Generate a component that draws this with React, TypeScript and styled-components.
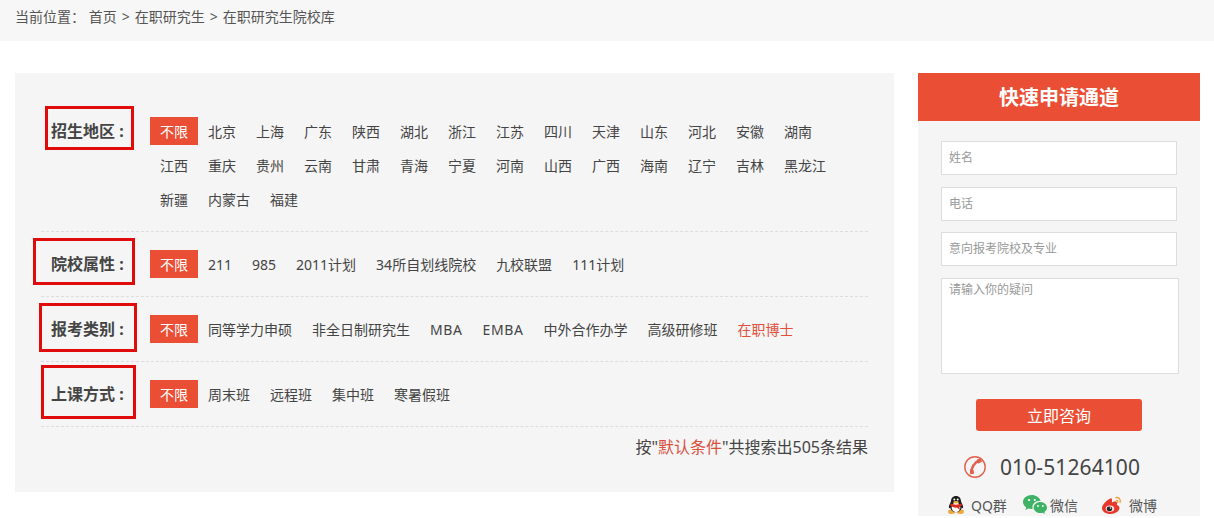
import React from 'react';
import styled, { createGlobalStyle } from 'styled-components';

const accent = '#ea4f35';

const GlobalStyle = createGlobalStyle`
    html, body {
        margin: 0;
        padding: 0;
        background: #fff;
        overflow: hidden;
    }
    body {
        font-family: "Noto Sans", "Noto Sans CJK SC", sans-serif;
        font-size: 14px;
        color: #444;
    }
    * {
        box-sizing: border-box;
    }
`;

const Crumbs = styled.div`
    display: flex;
    height: 41px;
    padding-left: 15px;
    line-height: 34px;
    background: #f7f7f7;
    color: #555;
    white-space: pre;
`;

const CrumbSep = styled.span`
    width: 18px;
    text-align: center;
`;

const Main = styled.div`
    display: flex;
    align-items: flex-start;
    padding: 32px 14px 0 15px;
    gap: 24px;
`;

const Panel = styled.div`
    position: relative;
    width: 879px;
    height: 419px;
    padding: 26px 26px 0;
    background: #f5f5f5;
`;

const Row = styled.div`
    display: flex;
    align-items: flex-start;
    padding: 15px 0;
    border-bottom: 1px dashed #ddd;
`;

const Label = styled.div`
    width: 109px;
    flex: none;
    padding-left: 10px;
    font-size: 16px;
    font-weight: 700;
    line-height: 34px;
    color: #444;
`;

const Tags = styled.div`
    display: flex;
    flex-wrap: wrap;
    flex: 1;
`;

const Tag = styled.a<{ $active?: boolean; $hot?: boolean; $latin?: boolean }>`
    height: 28px;
    margin: 3px 0;
    padding: 0 10px;
    line-height: 30px;
    font-size: 14px;
    white-space: nowrap;
    letter-spacing: ${p => (p.$latin ? '0.6px' : '0')};
    color: ${p => (p.$active ? '#fff' : p.$hot ? '#e2503c' : '#444')};
    background: ${p => (p.$active ? accent : 'transparent')};
`;

const Summary = styled.div`
    margin-top: 8px;
    font-size: 16px;
    line-height: 24px;
    text-align: right;
    color: #444;

    em {
        font-style: normal;
        color: #d9503f;
    }
`;

// the hand-drawn highlights on top of the filter labels
const Marker = styled.div<{ $x: number; $y: number; $w: number; $h: number }>`
    position: absolute;
    left: ${p => p.$x}px;
    top: ${p => p.$y}px;
    width: ${p => p.$w}px;
    height: ${p => p.$h}px;
    border: 3px solid #e00c0c;
    pointer-events: none;
`;

const Side = styled.div`
    width: 282px;
    flex: none;
    background: #f5f5f5;
`;

const SideTitle = styled.div`
    height: 48px;
    line-height: 50px;
    text-align: center;
    font-size: 20px;
    font-weight: 700;
    color: #fff;
    background: ${accent};
`;

const Form = styled.form`
    display: flex;
    flex-direction: column;
    align-items: flex-start;
    padding: 20px 0 0 23px;
`;

const Field = styled.input`
    width: 236px;
    height: 34px;
    margin-bottom: 12px;
    padding: 0 7px 2px;
    border: 1px solid #ddd;
    background: #fff;
    font: 12px "Noto Sans", "Noto Sans CJK SC", sans-serif;
    outline: none;

    &:nth-child(2) {
        margin-bottom: 11px;
    }
    &::placeholder {
        color: #999;
        opacity: 1;
    }
`;

const Question = styled.textarea`
    display: block;
    width: 238px;
    height: 96px;
    padding: 2px 7px;
    border: 1px solid #ddd;
    background: #fff;
    font: 12px/17px "Noto Sans", "Noto Sans CJK SC", sans-serif;
    outline: none;
    resize: none;

    &::placeholder {
        color: #999;
        opacity: 1;
    }
`;

const Submit = styled.button`
    display: block;
    width: 166px;
    height: 32px;
    margin: 25px 0 0 58px;
    padding: 0;
    border: 0;
    border-radius: 3px;
    background: ${accent};
    color: #fff;
    font: 16px "Noto Sans", "Noto Sans CJK SC", sans-serif;
`;

const Phone = styled.div`
    display: flex;
    align-items: center;
    gap: 14px;
    height: 24px;
    margin: 24px 0 0 46px;
    font-size: 21px;
    letter-spacing: 0.1px;
    color: #444;
`;

const Social = styled.div`
    display: flex;
    align-items: center;
    height: 22px;
    margin: 15px 0 0 30px;
    font-size: 14px;
    color: #555;
`;

const SocialItem = styled.span<{ $w: number; $gap: number }>`
    display: flex;
    align-items: center;
    width: ${p => p.$w}px;
    gap: ${p => p.$gap}px;
    white-space: nowrap;
`;

const regions = [
    '北京', '上海', '广东', '陕西', '湖北', '浙江', '江苏', '四川', '天津', '山东', '河北', '安徽', '湖南',
    '江西', '重庆', '贵州', '云南', '甘肃', '青海', '宁夏', '河南', '山西', '广西', '海南', '辽宁', '吉林', '黑龙江',
    '新疆', '内蒙古', '福建',
];
const schools = ['211', '985', '2011计划', '34所自划线院校', '九校联盟', '111计划'];
const kinds = ['同等学力申硕', '非全日制研究生', 'MBA', 'EMBA', '中外合作办学', '高级研修班'];
const modes = ['周末班', '远程班', '集中班', '寒暑假班'];

function PhoneIcon() {
    return (
        <svg width="22" height="22" viewBox="0 0 22 22" fill="none">
            <circle cx="11" cy="11" r="10.200" stroke="#e2604c" strokeWidth="1.400" />
            <path d="M15.500 4.200C10.600 6.200 7 11.500 7.300 17.500" stroke="#e2604c" strokeWidth="2.600" />
            <path d="M13 3.600l3.800-1 1.200 3.200-4 2zM5.800 13.500l3.800.4.500 3.600-3.600 1z" fill="#e2604c" />
        </svg>
    );
}

function QQIcon() {
    return (
        <svg width="16" height="18" viewBox="0 0 16 18">
            <ellipse cx="3.500" cy="15.800" rx="3.500" ry="2.200" fill="#eda93c" />
            <ellipse cx="12.500" cy="15.800" rx="3.500" ry="2.200" fill="#eda93c" />
            <path d="M8 0c3.300 0 4.900 2.400 5 5.200.1 1.300 2 3.400 2.100 5.600.1 1.600-.7 2-1.300.8-.5 2.600-2.900 4.600-5.800 4.600s-5.300-2-5.800-4.600c-.6 1.200-1.400.8-1.300-.8C1 8.600 2.900 6.500 3 5.200 3.100 2.400 4.700 0 8 0z" fill="#1d1d1d" />
            <ellipse cx="8" cy="11.400" rx="4.300" ry="4.800" fill="#fff" />
            <path d="M2.700 7.600c3.200 1.400 7.400 1.400 10.600 0l.8 2-2.700 1.300.5 3.200-2.800-2.500c-2 .3-4.700-.3-6.900-2z" fill="#d8291d" />
            <ellipse cx="8" cy="6.300" rx="2.800" ry="1.300" fill="#eeb13c" />
            <circle cx="6.300" cy="3.500" r="1" fill="#fff" />
            <circle cx="9.700" cy="3.500" r="1" fill="#fff" />
        </svg>
    );
}

function WechatIcon() {
    return (
        <svg width="24" height="20" viewBox="0 0 24 20">
            <path d="M8.800 0C3.900 0 0 3.100 0 7c0 2.200 1.200 4.100 3.200 5.400L2.400 15l2.900-1.500c1.100.3 2.200.5 3.500.5.300 0 .6 0 .9 0-.2-.6-.3-1.200-.3-1.900 0-3.600 3.400-6.400 7.700-6.400.2 0 .4 0 .6 0C16.100 2.300 12.800 0 8.800 0z" fill="#3fb265" />
            <path d="M24 12.600c0-3-3-5.500-6.700-5.500s-6.700 2.500-6.700 5.500 3 5.500 6.700 5.500c.8 0 1.600-.1 2.300-.3l2.300 1.200-.6-2c1.700-1 2.700-2.600 2.700-4.400z" fill="#3fb265" />
            <circle cx="6" cy="5" r="1.100" fill="#fff" />
            <circle cx="11.800" cy="5" r="1.100" fill="#fff" />
            <circle cx="15" cy="11" r="0.900" fill="#fff" />
            <circle cx="19.800" cy="11" r="0.900" fill="#fff" />
        </svg>
    );
}

function WeiboIcon() {
    return (
        <svg width="20" height="18" viewBox="0 0 20 18">
            <path d="M8.500 2.500C4.400 4.300 0 8.600 0 12.200 0 15.600 4 18 8.300 18c5.300 0 9.200-3.200 9.200-6 0-1.800-1.500-2.700-2.700-3 .5-1.500.4-2.600-.4-3.200-1.200-.8-3.200 0-4.600.7.500-2.400.300-4.700-1.300-4z" fill="#e6372d" />
            <ellipse cx="8" cy="12.600" rx="4.300" ry="3.200" fill="#fbe3dc" />
            <ellipse cx="7.500" cy="12.700" rx="2.700" ry="2.300" fill="#222" />
            <circle cx="8.500" cy="12" r="0.800" fill="#fff" />
            <path d="M14 1.600c2.600-.6 5 1.800 4.100 4.700M14.400 4.400c1-.2 1.700.6 1.400 1.600" fill="none" stroke="#f0a12f" strokeWidth="1.400" strokeLinecap="round" />
        </svg>
    );
}

function FilterRow({ label, items, hot }: { label: string; items: string[]; hot?: string }) {
    return (
        <Row>
            <Label>{label} :</Label>
            <Tags>
                <Tag $active>不限</Tag>
                {items.map(item => <Tag key={item} $latin={/^[A-Z]+$/.test(item)}>{item}</Tag>)}
                {hot && <Tag $hot>{hot}</Tag>}
            </Tags>
        </Row>
    );
}

export default function App() {
    return (
        <>
            <GlobalStyle />
            <Crumbs>
                <span>当前位置： 首页</span>
                <CrumbSep>&gt;</CrumbSep>
                <span>在职研究生</span>
                <CrumbSep>&gt;</CrumbSep>
                <span>在职研究生院校库</span>
            </Crumbs>
            <Main>
                <Panel>
                    <FilterRow label="招生地区" items={regions} />
                    <FilterRow label="院校属性" items={schools} />
                    <FilterRow label="报考类别" items={kinds} hot="在职博士" />
                    <FilterRow label="上课方式" items={modes} />
                    <Summary>按"<em>默认条件</em>"共搜索出505条结果</Summary>
                    <Marker $x={30} $y={33} $w={89} $h={44} />
                    <Marker $x={18} $y={165} $w={102} $h={47} />
                    <Marker $x={24} $y={230} $w={98} $h={49} />
                    <Marker $x={26} $y={292} $w={95} $h={54} />
                </Panel>
                <Side>
                    <SideTitle>快速申请通道</SideTitle>
                    <Form>
                        <Field placeholder="姓名" />
                        <Field placeholder="电话" />
                        <Field placeholder="意向报考院校及专业" />
                        <Question placeholder="请输入你的疑问" />
                    </Form>
                    <Submit type="button">立即咨询</Submit>
                    <Phone><PhoneIcon />010-51264100</Phone>
                    <Social>
                        <SocialItem $w={75} $gap={7}><QQIcon />QQ群</SocialItem>
                        <SocialItem $w={79} $gap={3}><WechatIcon />微信</SocialItem>
                        <SocialItem $w={60} $gap={7}><WeiboIcon />微博</SocialItem>
                    </Social>
                </Side>
            </Main>
        </>
    );
}
